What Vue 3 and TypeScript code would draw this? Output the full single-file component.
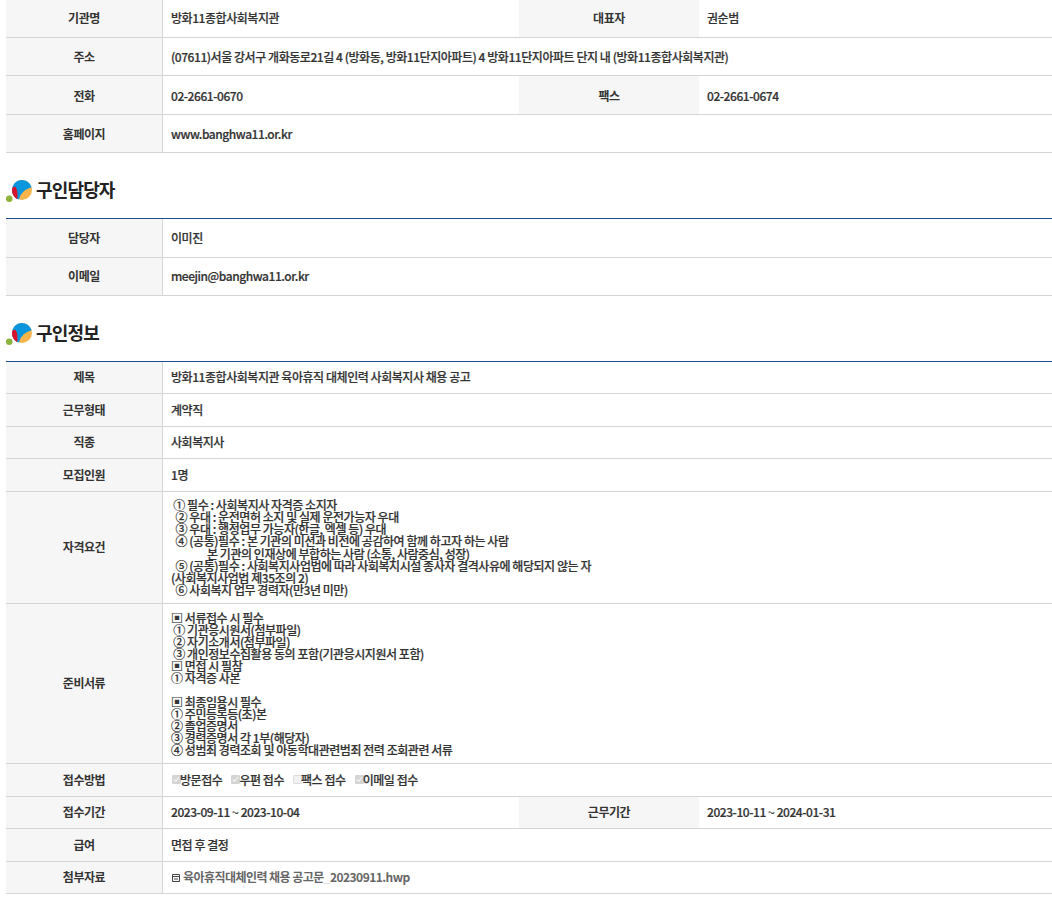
<script setup lang="ts">
interface Row { h: number; label: string; value?: string; label2?: string; value2?: string; lines?: string[]; kind?: string; tight?: boolean }

const org: Row[] = [
  { h: 38, label: '기관명', value: '방화11종합사회복지관', label2: '대표자', value2: '권순범' },
  { h: 38, label: '주소', value: '(07611)서울 강서구 개화동로21길 4 (방화동, 방화11단지아파트) 4 방화11단지아파트 단지 내 (방화11종합사회복지관)' },
  { h: 39, label: '전화', value: '02-2661-0670', label2: '팩스', value2: '02-2661-0674' },
  { h: 38, label: '홈페이지', value: 'www.banghwa11.or.kr' },
]
const contact: Row[] = [
  { h: 39, label: '담당자', value: '이미진' },
  { h: 38, label: '이메일', value: 'meejin@banghwa11.or.kr' },
]
const job: Row[] = [
  { h: 32, label: '제목', value: '방화11종합사회복지관 육아휴직 대체인력 사회복지사 채용 공고' },
  { h: 33, label: '근무형태', value: '계약직' },
  { h: 32, label: '직종', value: '사회복지사' },
  { h: 33, label: '모집인원', value: '1명' },
  {
    h: 112, label: '자격요건', lines: [
      ' ① 필수 : 사회복지사 자격증 소지자',
      '  ② 우대 : 운전면허 소지 및 실제 운전가능자 우대',
      '  ③ 우대 : 행정업무 가능자(한글, 엑셀 등) 우대',
      '  ④ (공통)필수 : 본 기관의 미션과 비전에 공감하여 함께 하고자 하는 사람',
      '                본 기관의 인재상에 부합하는 사람 (소통, 사람중심, 성장)',
      '  ⑤ (공통)필수 : 사회복지사업법에 따라 사회복지시설 종사자 결격사유에 해당되지 않는 자',
      '(사회복지사업법 제35조의 2)',
      '  ⑥ 사회복지 업무 경력자(만3년 미만)',
    ],
  },
  {
    h: 160, label: '준비서류', tight: true, lines: [
      '▣ 서류접수 시 필수',
      ' ① 기관응시원서(첨부파일)',
      ' ② 자기소개서(첨부파일)',
      ' ③ 개인정보수집활용 동의 포함(기관응시지원서 포함)',
      '▣ 면접 시 필참',
      '① 자격증 사본',
      ' ',
      '▣ 최종임용시 필수',
      '① 주민등록등(초)본',
      '② 졸업증명서',
      '③ 경력증명서 각 1부(해당자)',
      '④ 성범죄 경력조회 및 아동학대관련범죄 전력 조회관련 서류',
    ],
  },
  { h: 33, label: '접수방법', kind: 'methods' },
  { h: 32, label: '접수기간', value: '2023-09-11 ~ 2023-10-04', label2: '근무기간', value2: '2023-10-11 ~ 2024-01-31' },
  { h: 33, label: '급여', value: '면접 후 결정' },
  { h: 32, label: '첨부자료', kind: 'file' },
]
const methods = [
  { text: '방문접수', on: true },
  { text: '우편 접수', on: true },
  { text: '팩스 접수', on: false },
  { text: '이메일 접수', on: true },
]
const sections = [
  { title: '', rows: org },
  { title: '구인담당자', rows: contact },
  { title: '구인정보', rows: job },
]
</script>

<template>
  <main class="page">
    <section v-for="s in sections" :key="s.title" class="section">
      <h2 v-if="s.title" class="heading">
        <svg class="logo" width="30" height="26" viewBox="0 0 30 26" aria-hidden="true">
          <circle cx="3.200" cy="20.800" r="3.300" fill="#8cb33a" />
          <circle cx="16" cy="12" r="10" fill="#f9b54c" />
          <path d="M6 12A10 10 0 0 1 25.700 9.500C19.500 10.500 14.500 15 13 21.600 9 20.500 6 16.500 6 12Z" fill="#0a96dc" />
          <path d="M6.300 10c1.500-1.200 2.500-1.500 3.300-1 1.800 3 2.300 6.500 1.600 12.200C8 19.500 6 16 6 12c0-.7.100-1.300.3-2Z" fill="#d9132a" />
        </svg>
        <span>{{ s.title }}</span>
      </h2>
      <table class="info" :class="{ first: !s.title }">
        <colgroup>
          <col class="c1" /><col class="c2" /><col class="c3" /><col />
        </colgroup>
        <tbody>
          <tr v-for="r in s.rows" :key="r.label" :style="{ height: r.h + 'px' }">
            <th>{{ r.label }}</th>
            <template v-if="r.label2">
              <td>{{ r.value }}</td>
              <th class="plain">{{ r.label2 }}</th>
              <td>{{ r.value2 }}</td>
            </template>
            <td v-else colspan="3" :class="{ multi: r.lines, tight: r.tight }">
              <template v-if="r.lines">
                <div v-for="(l, i) in r.lines" :key="i" class="line">{{ l }}</div>
              </template>
              <div v-else-if="r.kind === 'methods'" class="methods">
                <span v-for="m in methods" :key="m.text" class="method">
                  <i class="check" :class="{ on: m.on }">
                    <svg v-if="m.on" width="7" height="7" viewBox="0 0 9 9"><path d="M1 4.500l2.500 2.500 4.500-6" fill="none" stroke="#f4f4f4" stroke-width="1.400" /></svg>
                  </i>{{ m.text }}
                </span>
              </div>
              <span v-else-if="r.kind === 'file'" class="file">
                <svg class="file-icon" width="8" height="8" viewBox="0 0 8 8"><path d="M.5.500h7v7h-7zM.5 2.500h7M2 5h4" fill="none" stroke="#444" /></svg>육아휴직대체인력 채용 공고문<span class="under">_</span>20230911.hwp
              </span>
              <template v-else>{{ r.value }}</template>
            </td>
          </tr>
        </tbody>
      </table>
    </section>
  </main>
</template>

<style scoped>
.page {
  width: 1046px;
  margin-left: 6px;
  font-family: "Noto Sans CJK KR", "Noto Sans", sans-serif;
  font-size: 12px;
  color: #333;
}
.heading {
  display: flex;
  align-items: center;
  gap: 0;
  height: 65px;
  margin: 0;
  padding-top: 7px;
  box-sizing: border-box;
  font-size: 18px;
  font-weight: 700;
  letter-spacing: -0.85px;
  color: #222;
}
.logo { margin-top: 4px; flex: none; }
.info {
  width: 100%;
  table-layout: fixed;
  border-collapse: separate;
  border-spacing: 0;
  border-top: 1px solid #1d4f91;
}
.info.first { border-top: 0; }
.c1 { width: 157px; }
.c2 { width: 356px; }
.c3 { width: 180px; }
th, td {
  padding: 0 0 2px;
  border-bottom: 1px solid #d5d5d5;
  box-sizing: border-box;
  letter-spacing: -0.45px;
  font-size: 12px;
}
th {
  background: #f6f6f6;
  border-right: 1px solid #d5d5d5;
  font-weight: 700;
  text-align: center;
  color: #333;
}
th.plain { border-right: 0; }
td {
  padding-left: 8px;
  font-weight: 500;
  text-align: left;
  color: #333;
  -webkit-text-stroke: 0.2px #333;
}
.first tr:not(:first-child) th,
.first tr:not(:first-child) td { padding-bottom: 0; }
.multi { line-height: 12.1px; padding-bottom: 0; }
.multi.tight { line-height: 12px; }
.line { white-space: pre; }
.methods { display: flex; gap: 8px; }
.method { display: inline-flex; align-items: center; }
.check {
  display: inline-flex;
  align-items: center;
  justify-content: center;
  box-sizing: border-box;
  width: 9px;
  height: 9px;
  margin: 0 0 0 1px;
  margin-right: -1px;
  background: #f2f2f2;
  border: 1px solid #ddd;
  border-radius: 1px;
}
.check.on { background: #d4d4d4; border-color: #d4d4d4; }
.file { color: #666; font-weight: 700; letter-spacing: -0.55px; -webkit-text-stroke: 0; }
.file-icon { margin: 0 3px 0 1px; }
.under { color: #ddd; }
</style>
